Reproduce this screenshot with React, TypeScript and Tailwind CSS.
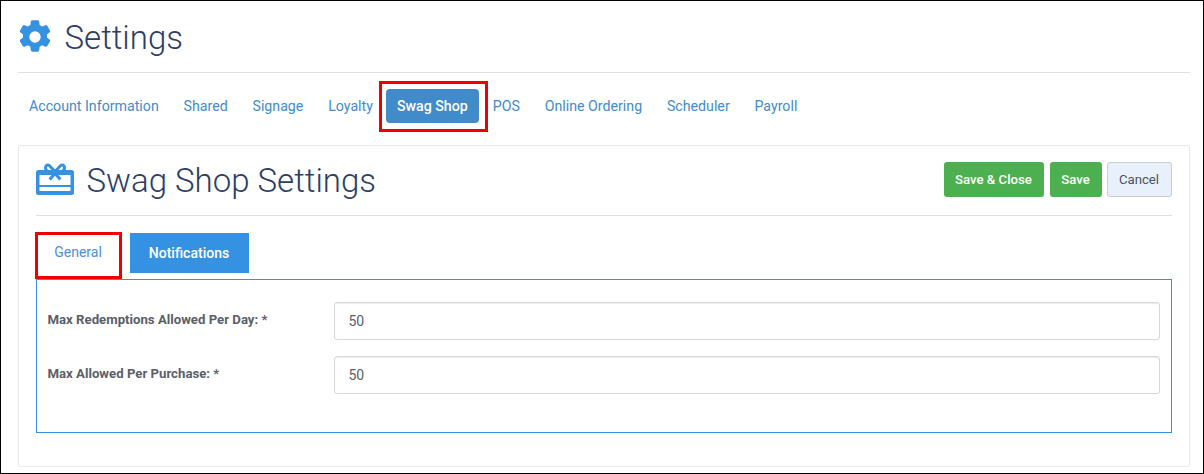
import React from 'react';

const tabs = ['Account Information', 'Shared', 'Signage', 'Loyalty', 'Swag Shop', 'POS', 'Online Ordering', 'Scheduler', 'Payroll'];

const GearIcon = () => (
  <svg width="32" height="34" viewBox="1.300 0.800 21.400 22.400" fill="#3592e2">
    <path
      fillRule="evenodd"
      d="M10.200 .8h3.600a1 1 0 0 1 1 .9l.3 2.300a8.400 8.400 0 0 1 1.700 1l2.200-.9a1 1 0 0 1 1.200.4l1.800 3.100a1 1 0 0 1-.2 1.300l-1.800 1.400a8.500 8.500 0 0 1 0 2l1.800 1.400a1 1 0 0 1 .2 1.300l-1.800 3.100a1 1 0 0 1-1.200.4l-2.200-.9a8.400 8.400 0 0 1-1.700 1l-.3 2.300a1 1 0 0 1-1 .9h-3.600a1 1 0 0 1-1-.9l-.3-2.300a8.400 8.400 0 0 1-1.700-1l-2.200.9a1 1 0 0 1-1.200-.4l-1.800-3.100a1 1 0 0 1 .2-1.300l1.800-1.400a8.500 8.500 0 0 1 0-2l-1.800-1.400a1 1 0 0 1-.2-1.300l1.800-3.100a1 1 0 0 1 1.200-.4l2.200.9a8.400 8.400 0 0 1 1.700-1l.3-2.300a1 1 0 0 1 1-.9zM12 8.200a3.800 3.800 0 1 0 0 7.600 3.800 3.800 0 0 0 0-7.600z"
    />
  </svg>
);

const GiftIcon = () => (
  <svg className="mb-[4px]" width="38" height="32" viewBox="0 0 38 32" fill="none">
    <rect x="0" y="7" width="38" height="25" rx="2.500" fill="#3592e2" />
    <rect x="3.500" y="12" width="31" height="10" fill="#fff" />
    <rect x="3.500" y="24" width="31" height="4" fill="#fff" />
    <path
      d="M19 8.500 13.500 2.800C12 1.200 9.500 2.200 9.500 4.700S11.500 8.500 14 8.500M19 8.500l5.500-5.700C26 1.200 28.500 2.200 28.500 4.700s-2 3.800-4.500 3.800"
      stroke="#3592e2"
      strokeWidth="3"
    />
    <path d="m17.800 9.500-5.300 6 2.300 2 4.200-4.700 4.200 4.700 2.300-2-5.300-6z" fill="#3592e2" />
  </svg>
);

const App: React.FC = () => {
  return (
    <div className="w-[1204px] h-[474px] bg-white overflow-hidden font-['Roboto',sans-serif] text-[14px]">
      <div className="h-[474px] w-[1204px] border-l-[1.5px] border-t border-b-[1.5px] border-r-[1.5px] border-black pl-[16.5px] pr-[13.5px] bg-white">
        <div className="flex items-center h-[72px] border-b border-[#dedfe2] pl-px">
          <GearIcon />
          <h1 className="ml-[14px] text-[33px] font-light text-[#2c3e64] leading-none mt-[2px]">Settings</h1>
        </div>

        <nav className="flex items-center h-[72px] pb-[5px] pl-[11.500px] gap-[24.800px]">
          {tabs.map((tab) =>
            tab === 'Swag Shop' ? (
              <div key={tab} className="border-[3px] border-[#ee0000] pl-[4px] pr-[6px] pt-[5px] pb-[6px] ml-[-18.800px] mr-[-19.800px]">
                <a className="block h-[34px] leading-[34px] px-[11px] rounded-[4px] bg-[#428bca] text-white font-medium text-[14.2px]">{tab}</a>
              </div>
            ) : (
              <a key={tab} className="block text-[#428bca] text-[14.2px]">{tab}</a>
            )
          )}
        </nav>

        <div className="h-[322px] border border-[#e8e9ec] rounded-[2px] px-[17px] bg-white">
          <div className="flex items-center justify-between h-[70px] border-b border-[#dedfe2]">
            <div className="flex items-center">
              <GiftIcon />
              <h2 className="ml-[13px] text-[33px] font-light text-[#2c3e64] leading-none">Swag Shop Settings</h2>
            </div>
            <div className="flex items-center gap-[6px] mb-[2px]">
              <button className="h-[35px] w-[100px] rounded-[3px] bg-[#4caf50] text-white text-[13.2px] font-medium">Save &amp; Close</button>
              <button className="h-[35px] w-[52px] rounded-[3px] bg-[#4caf50] text-white text-[13.2px] font-medium">Save</button>
              <button className="h-[35px] w-[65px] -ml-px rounded-[3px] bg-[#e8f1fb] border border-[#c9ccd1] text-[#4a5260] text-[13.2px]">Cancel</button>
            </div>
          </div>

          <div className="flex items-start h-[63px]">
            <div className="mt-[16px] -ml-px w-[87px] h-[47px] border-[3px] border-[#ee0000] flex items-center justify-center text-[#4a90d9] pb-[6px]">General</div>
            <div className="mt-[17px] ml-[8px] w-[119px] h-[40px] flex items-center justify-center bg-[#3592e2] text-white font-medium">Notifications</div>
          </div>

          <div className="h-[154px] border border-[#3592e2] pl-[11px] pr-[11px] pt-[22px]">
            <div className="flex items-center h-[38px]">
              <label className="w-[286px] text-[13.200px] font-bold text-[#5a6069] -mt-[2px]">Max Redemptions Allowed Per Day: *</label>
              <input readOnly value="50" className="flex-1 h-[38px] border border-[#d8d8d8] rounded-[3px] pl-[14px] text-[#5a6069] bg-white shadow-[inset_0_1px_1px_rgba(0,0,0,0.08)]" />
            </div>
            <div className="flex items-center h-[38px] mt-[16px]">
              <label className="w-[286px] text-[13.200px] font-bold text-[#5a6069] -mt-[2px]">Max Allowed Per Purchase: *</label>
              <input readOnly value="50" className="flex-1 h-[38px] border border-[#d8d8d8] rounded-[3px] pl-[14px] text-[#5a6069] bg-white shadow-[inset_0_1px_1px_rgba(0,0,0,0.08)]" />
            </div>
          </div>
        </div>
      </div>
    </div>
  );
};

export default App;
